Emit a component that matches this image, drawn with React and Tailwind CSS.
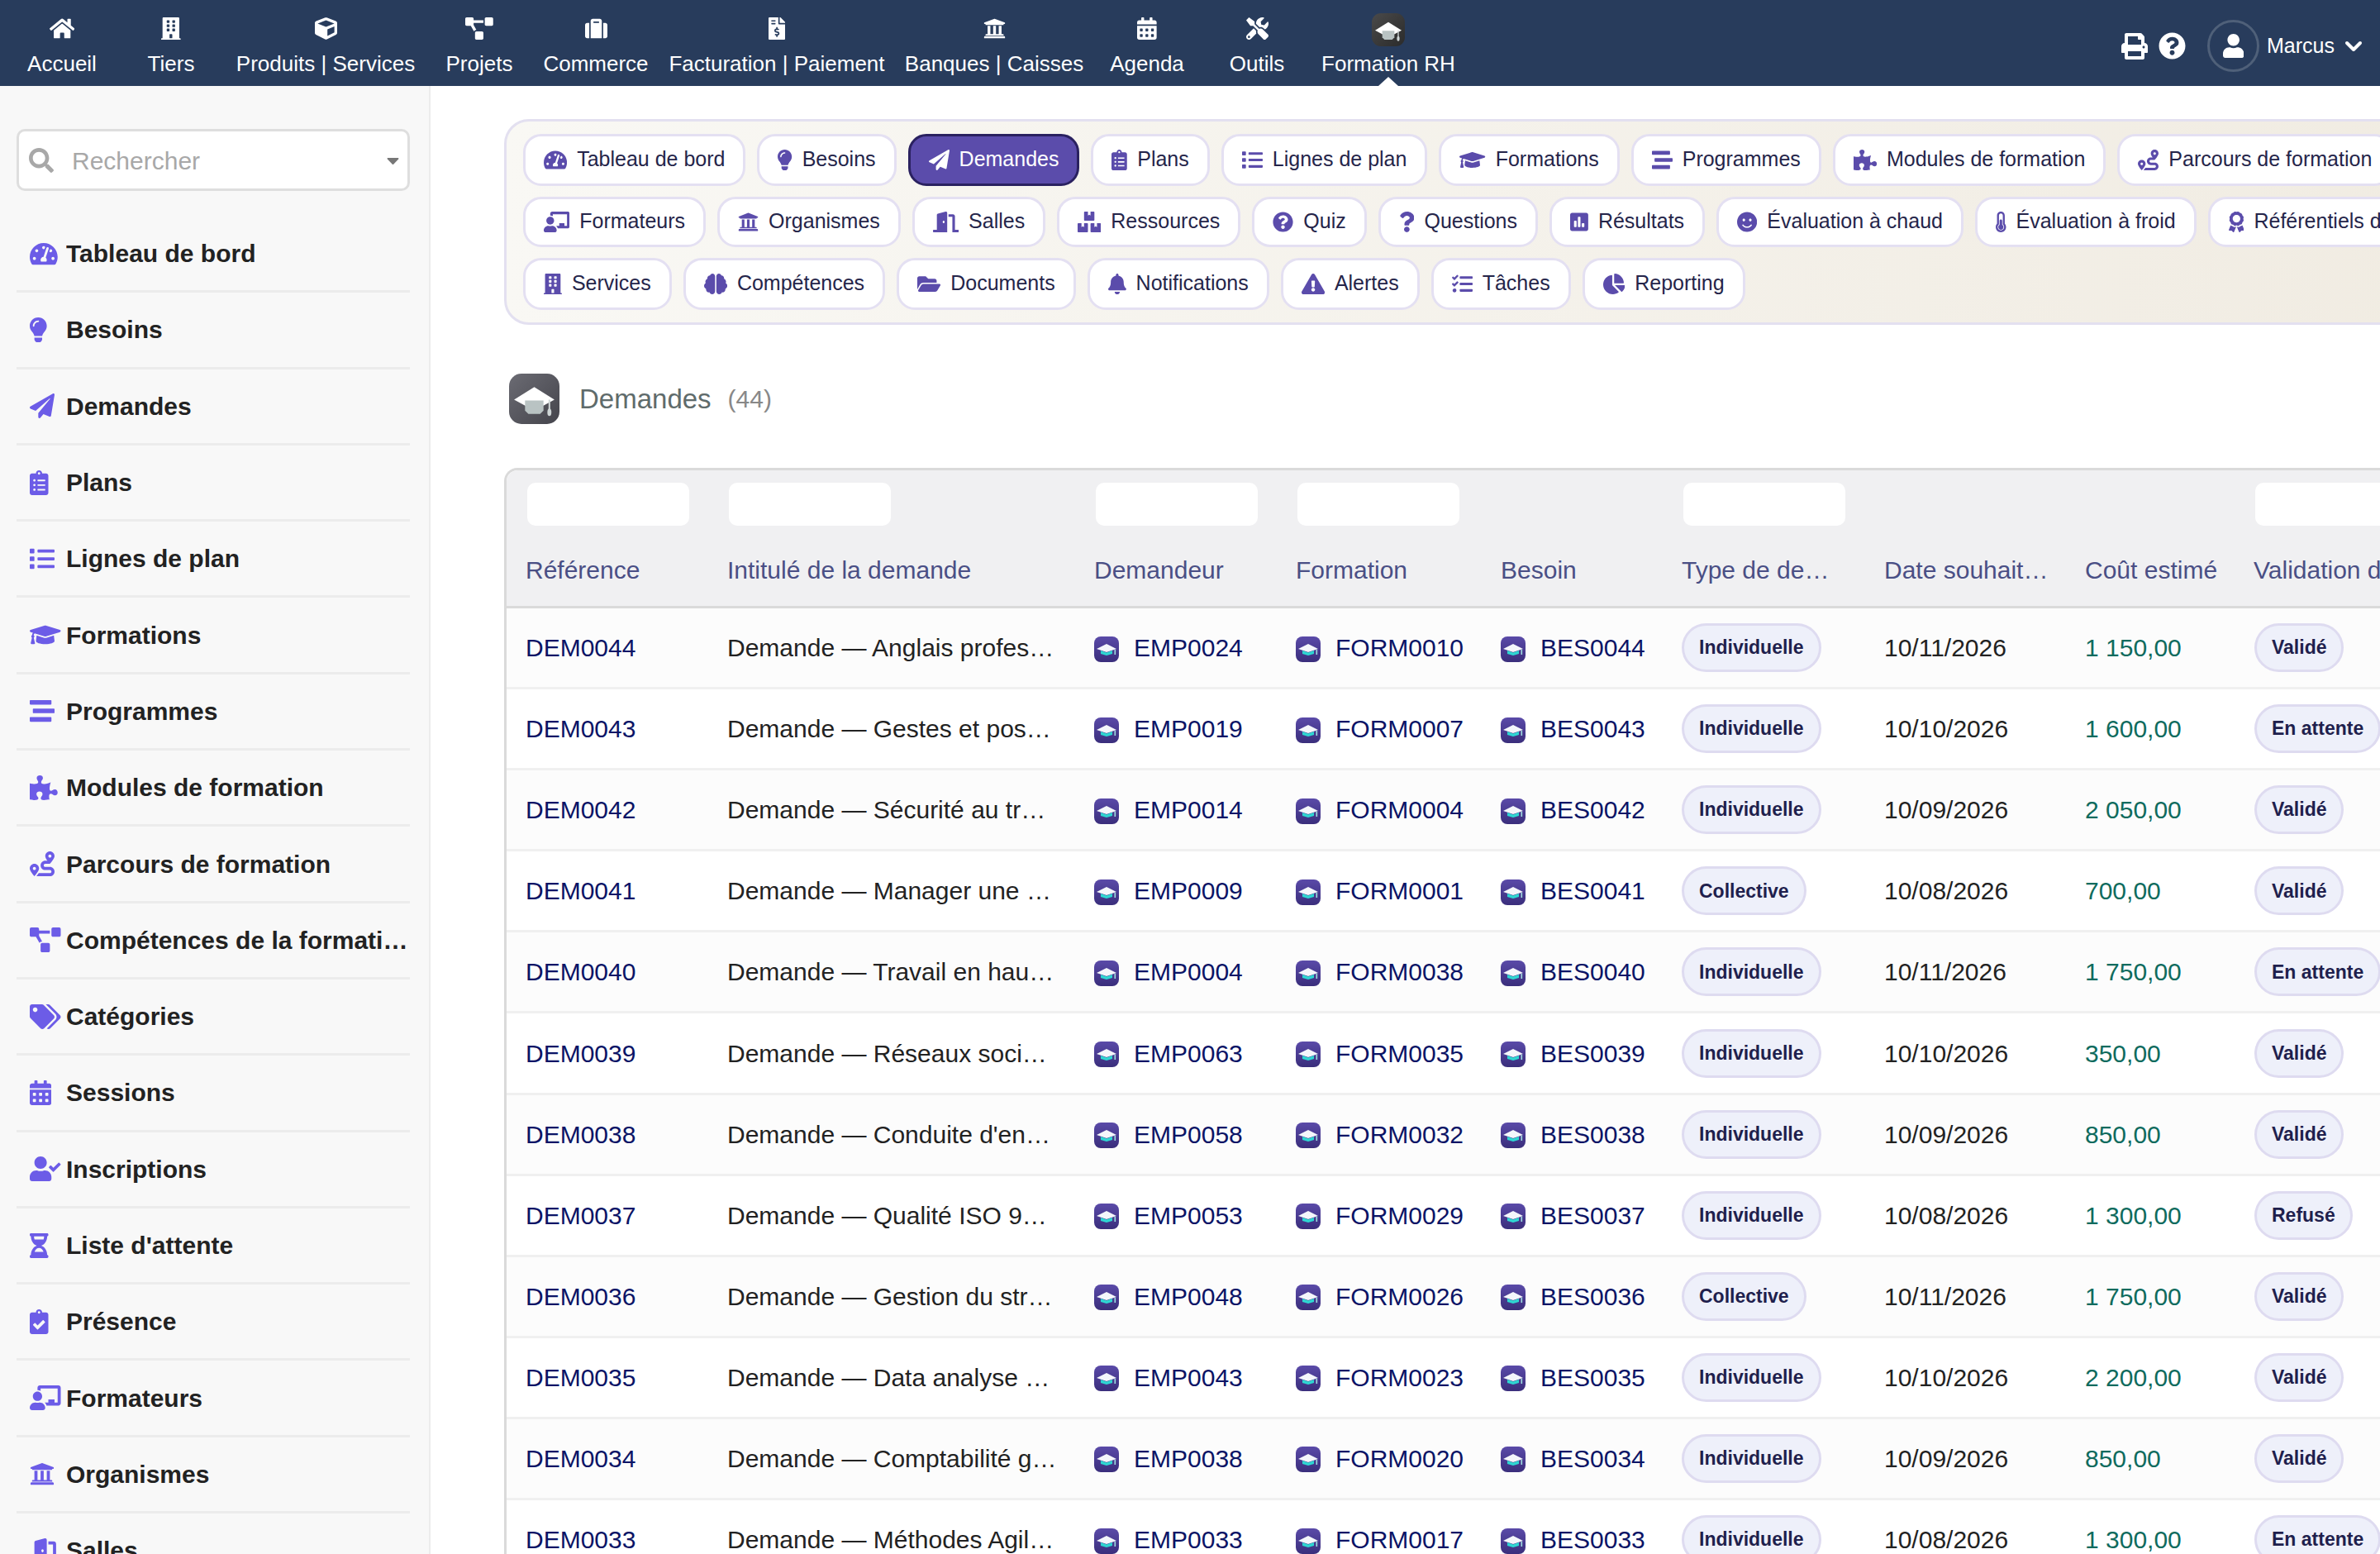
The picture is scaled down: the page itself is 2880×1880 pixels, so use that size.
import {
  FaAward, FaBell, FaBoxes, FaBrain, FaBuilding, FaCalendarAlt, FaCaretDown, FaChalkboardTeacher,
  FaChartPie, FaClipboardCheck, FaClipboardList, FaCube, FaDoorOpen, FaExclamationTriangle,
  FaFileInvoiceDollar, FaFolderOpen, FaGraduationCap, FaHome, FaHourglassHalf, FaLightbulb, FaList,
  FaPaperPlane, FaPoll, FaPrint, FaProjectDiagram, FaPuzzlePiece, FaQuestion, FaQuestionCircle,
  FaRoute, FaSearch, FaSmile, FaStream, FaSuitcase, FaTachometerAlt, FaTags, FaTasks,
  FaThermometerHalf, FaTools, FaUniversity, FaUser, FaUserCheck,
} from "react-icons/fa";
import { ChevronDown } from "lucide-react";

const navItems = [
  { label: "Accueil", icon: FaHome, width: "w-[150px]" },
  { label: "Tiers", icon: FaBuilding, width: "w-[114px]" },
  { label: "Produits | Services", icon: FaCube, width: "w-[260px]" },
  { label: "Projets", icon: FaProjectDiagram, width: "w-[112px]" },
  { label: "Commerce", icon: FaSuitcase, width: "w-[170px]" },
  { label: "Facturation | Paiement", icon: FaFileInvoiceDollar, width: "w-[268px]" },
  { label: "Banques | Caisses", icon: FaUniversity, width: "w-[258px]" },
  { label: "Agenda", icon: FaCalendarAlt, width: "w-[112px]" },
  { label: "Outils", icon: FaTools, width: "w-[154px]" },
];

const sideItems = [
  ["Tableau de bord", FaTachometerAlt],
  ["Besoins", FaLightbulb],
  ["Demandes", FaPaperPlane],
  ["Plans", FaClipboardList],
  ["Lignes de plan", FaList],
  ["Formations", FaGraduationCap],
  ["Programmes", FaStream],
  ["Modules de formation", FaPuzzlePiece],
  ["Parcours de formation", FaRoute],
  ["Compétences de la formation", FaProjectDiagram],
  ["Catégories", FaTags],
  ["Sessions", FaCalendarAlt],
  ["Inscriptions", FaUserCheck],
  ["Liste d'attente", FaHourglassHalf],
  ["Présence", FaClipboardCheck],
  ["Formateurs", FaChalkboardTeacher],
  ["Organismes", FaUniversity],
  ["Salles", FaDoorOpen],
];

const chipRows = [
  {
    height: "h-[63px]",
    chips: [
      ["Tableau de bord", FaTachometerAlt],
      ["Besoins", FaLightbulb],
      ["Demandes", FaPaperPlane, true],
      ["Plans", FaClipboardList],
      ["Lignes de plan", FaList],
      ["Formations", FaGraduationCap],
      ["Programmes", FaStream],
      ["Modules de formation", FaPuzzlePiece],
      ["Parcours de formation", FaRoute],
    ],
  },
  {
    height: "h-[61px]",
    chips: [
      ["Formateurs", FaChalkboardTeacher],
      ["Organismes", FaUniversity],
      ["Salles", FaDoorOpen],
      ["Ressources", FaBoxes],
      ["Quiz", FaQuestionCircle],
      ["Questions", FaQuestion],
      ["Résultats", FaPoll],
      ["Évaluation à chaud", FaSmile],
      ["Évaluation à froid", FaThermometerHalf],
      ["Référentiels de compétences", FaAward],
    ],
  },
  {
    height: "h-[63px]",
    chips: [
      ["Services", FaBuilding],
      ["Compétences", FaBrain],
      ["Documents", FaFolderOpen],
      ["Notifications", FaBell],
      ["Alertes", FaExclamationTriangle],
      ["Tâches", FaTasks],
      ["Reporting", FaChartPie],
    ],
  },
];

const rows = [
  ["DEM0044", "Anglais professionnel", "EMP0024", "FORM0010", "BES0044", "Individuelle", "10/11/2026", "1 150,00", "Validé"],
  ["DEM0043", "Gestes et postures", "EMP0019", "FORM0007", "BES0043", "Individuelle", "10/10/2026", "1 600,00", "En attente"],
  ["DEM0042", "Sécurité au travail", "EMP0014", "FORM0004", "BES0042", "Individuelle", "10/09/2026", "2 050,00", "Validé"],
  ["DEM0041", "Manager une équipe", "EMP0009", "FORM0001", "BES0041", "Collective", "10/08/2026", "700,00", "Validé"],
  ["DEM0040", "Travail en hauteur", "EMP0004", "FORM0038", "BES0040", "Individuelle", "10/11/2026", "1 750,00", "En attente"],
  ["DEM0039", "Réseaux sociaux", "EMP0063", "FORM0035", "BES0039", "Individuelle", "10/10/2026", "350,00", "Validé"],
  ["DEM0038", "Conduite d'engins", "EMP0058", "FORM0032", "BES0038", "Individuelle", "10/09/2026", "850,00", "Validé"],
  ["DEM0037", "Qualité ISO 9001", "EMP0053", "FORM0029", "BES0037", "Individuelle", "10/08/2026", "1 300,00", "Refusé"],
  ["DEM0036", "Gestion du stress", "EMP0048", "FORM0026", "BES0036", "Collective", "10/11/2026", "1 750,00", "Validé"],
  ["DEM0035", "Data analyse Excel", "EMP0043", "FORM0023", "BES0035", "Individuelle", "10/10/2026", "2 200,00", "Validé"],
  ["DEM0034", "Comptabilité générale", "EMP0038", "FORM0020", "BES0034", "Individuelle", "10/09/2026", "850,00", "Validé"],
  ["DEM0033", "Méthodes Agiles Scrum", "EMP0033", "FORM0017", "BES0033", "Individuelle", "10/08/2026", "1 300,00", "En attente"],
];

const gridCols = "grid grid-cols-[241px_444px_244px_248px_219px_245px_243px_204px_1fr]";

// little square app logo, the graduation cap next to each linked record
const MiniLogo = () => (
  <svg viewBox="0 0 30 31" className="w-[30px] h-[31px] shrink-0 mt-[3px]">
    <defs>
      <linearGradient id="mini" x1="0" y1="0" x2="0" y2="1">
        <stop offset="0" stopColor="#5a4aa8" />
        <stop offset="1" stopColor="#3a2e7c" />
      </linearGradient>
    </defs>
    <rect width="30" height="31" rx="8" fill="url(#mini)" />
    <polygon points="15,9 27,15 15,19 3,15" fill="#f4f6fb" />
    <polygon points="8,17 15,19.5 22,17 22,21 15,23 8,21" fill="#2fd6d2" />
    <rect x="24.5" y="16" width="1.6" height="6" fill="#9fdde0" />
  </svg>
);

// larger logo used in the header bar and above the table
const CapLogo = ({ from, to, size }) => (
  <div className={`flex items-center justify-center bg-linear-to-br ${from} ${to} ${size}`}>
    <svg viewBox="0 0 60 60" className="w-full h-full">
      <polygon points="30,16 54,31 30,44 6,31" fill="#ffffff" />
      <polygon points="19,32 41,32 41,44 37,48 23,48 19,44" fill="#b9c3c3" />
      <rect x="47" y="31" width="2" height="12" fill="#cfd6d6" />
      <ellipse cx="48" cy="46" rx="2.4" ry="4.5" fill="#cfd6d6" />
    </svg>
  </div>
);

const TopBar = () => (
  <header className="h-[104px] shrink-0 bg-[#283c5c] flex text-white">
    {navItems.map(({ label, icon: Icon, width }) => (
      <div key={label} className={`${width} flex flex-col items-center`}>
        <div className="h-[32px] mt-[18px] flex items-center justify-center">
          <Icon size="auto" className="h-[27px] w-auto" />
        </div>
        <span className="mt-[12px] text-[26px] leading-[30px] whitespace-nowrap">{label}</span>
      </div>
    ))}
    <div className="relative w-[164px] flex flex-col items-center">
      <div className="mt-[16px]">
        <CapLogo from="from-[#4a4a4a]" to="to-[#2b2b2b]" size="w-[40px] h-[40px] rounded-[11px]" />
      </div>
      <span className="mt-[6px] text-[26px] leading-[30px] whitespace-nowrap">Formation RH</span>
      <span className="absolute bottom-0 left-[70px] w-0 h-0 border-x-[12px] border-x-transparent border-b-[11px] border-b-white" />
    </div>
    <div className="ml-auto pr-[16px] pt-[7px] flex items-center">
      <FaPrint size="auto" className="h-[32px] w-auto" />
      <FaQuestionCircle size="auto" className="h-[33px] w-auto ml-[13px]" />
      <div className="ml-[26px] w-[63px] h-[63px] rounded-full border-[3px] border-[#4f6079] flex items-center justify-center">
        <FaUser size="auto" className="h-[29px] w-auto" />
      </div>
      <span className="ml-[9px] text-[25px]">Marcus</span>
      <ChevronDown size={32} strokeWidth={3} className="ml-[7px]" />
    </div>
  </header>
);

const Sidebar = () => (
  <aside className="w-[521px] shrink-0 bg-[#f8f8f8] border-r-2 border-[#ececec] pt-[52px]">
    <div className="ml-[20px] w-[476px] h-[75px] bg-white border-[3px] border-[#dedede] rounded-[10px] flex items-center pl-[12px] pr-[10px]">
      <FaSearch size="auto" className="h-[30px] w-auto text-[#a8a8a8]" />
      <span className="ml-[22px] text-[30px] text-[#a8a8a8] translate-y-px">Rechercher</span>
      <FaCaretDown size="auto" className="h-[24px] w-auto ml-auto text-[#777777]" />
    </div>
    <nav className="mt-[31px] ml-[20px] w-[476px]">
      {sideItems.map(([label, Icon]) => (
        <div key={label} className="h-[92.3px] border-b-[3px] border-[#ececec] pl-[16px] flex items-center text-[30px] font-bold text-[#222222]">
          <span className="w-[44px] shrink-0">
            <Icon size="auto" className="h-[30px] w-auto text-[#6c5ce7]" />
          </span>
          <span className="truncate">{label}</span>
        </div>
      ))}
    </nav>
  </aside>
);

const Chip = ({ label, icon: Icon, active }) => (
  <div
    className={`h-full px-[22px] flex items-center gap-[12px] rounded-[22px] border-[3px] text-[25px] whitespace-nowrap ${
      active ? "bg-[#5b4cab] border-[#2a2160] text-white" : "bg-white border-[#e4e0f2] text-[#25254a]"
    }`}
  >
    <Icon size="auto" className={`h-[25px] w-auto ${active ? "text-white" : "text-[#5b4cab]"}`} />
    <span className="-translate-y-px">{label}</span>
  </div>
);

const FilterPanel = () => (
  <div className="w-[2500px] rounded-l-[30px] border-[3px] border-[#e3e0f0] bg-linear-to-r from-[#f9f8f4] to-[#f0ebe1] pl-[20px] py-[15px] flex flex-col gap-[13px]">
    {chipRows.map((row) => (
      <div key={row.chips[0][0]} className={`${row.height} flex gap-[14px]`}>
        {row.chips.map(([label, icon, active]) => (
          <Chip key={label} label={label} icon={icon} active={active} />
        ))}
      </div>
    ))}
  </div>
);

const FilterInput = () => <div className="ml-[2px] w-[196px] h-[52px] bg-white rounded-[10px]" />;

const Badge = ({ children }) => (
  <span className="inline-flex items-center h-[59px] px-[18px] rounded-[30px] bg-[#eef0fa] border-[3px] border-[#dedbf0] text-[23px] font-bold text-[#1f1f4d] whitespace-nowrap">
    {children}
  </span>
);

const RecordLink = ({ children }) => (
  <div className="flex items-center gap-[18px] text-[#0b1466]">
    <MiniLogo />
    {children}
  </div>
);

const DataTable = () => {
  const headers = ["Référence", "Intitulé de la demande", "Demandeur", "Formation", "Besoin", "Type de demande", "Date souhaitée", "Coût estimé", "Validation du manager"];
  const withFilter = [true, true, true, true, false, true, false, false, true];

  return (
    <div className="w-[2500px] mt-[53px] border-t-[3px] border-l-[3px] border-[#dadada] rounded-tl-[16px] text-[30px]">
      <div className={`${gridCols} h-[167px] bg-[#f0f0f2] border-b-[3px] border-[#dadada] rounded-tl-[14px]`}>
        {headers.map((h, i) => (
          <div key={h} className={`${i === 0 ? "pl-[23px]" : "pl-[26px]"} ${i === 7 ? "pr-[10px]" : "pr-[18px]"} pt-[15px] min-w-0`}>
            <div className="h-[52px]">{withFilter[i] && <FilterInput />}</div>
            <div className="mt-[36px] leading-[36px] text-[#4a4f85] truncate">{h}</div>
          </div>
        ))}
      </div>
      {rows.map((r, idx) => (
        <div
          key={r[0]}
          className={`${gridCols} h-[98.1px] items-center border-b-[3px] border-[#f0f0f0] ${idx % 2 === 0 ? "bg-[#fcfcfc]" : "bg-white"}`}
        >
          <div className="pl-[23px] text-[#0b1466]">{r[0]}</div>
          <div className="pl-[26px] pr-[18px] text-[#222222] truncate">Demande — {r[1]}</div>
          <div className="pl-[26px]"><RecordLink>{r[2]}</RecordLink></div>
          <div className="pl-[26px]"><RecordLink>{r[3]}</RecordLink></div>
          <div className="pl-[26px]"><RecordLink>{r[4]}</RecordLink></div>
          <div className="pl-[26px]"><Badge>{r[5]}</Badge></div>
          <div className="pl-[26px] text-[#222222]">{r[6]}</div>
          <div className="pl-[26px] text-[#0f6b5e]">{r[7]}</div>
          <div className="pl-[27px]"><Badge>{r[8]}</Badge></div>
        </div>
      ))}
    </div>
  );
};

const App = () => {
  return (
    <div className="h-screen overflow-hidden flex flex-col bg-white font-['Liberation_Sans',Arial,sans-serif]">
      <TopBar />
      <div className="flex flex-1 min-h-0">
        <Sidebar />
        <main className="flex-1 min-w-0 overflow-hidden pt-[40px] pl-[89px]">
          <FilterPanel />
          <div className="mt-[59px] pl-[6px] flex items-center h-[61px]">
            <CapLogo from="from-[#6b6b73]" to="to-[#45454c]" size="w-[61px] h-[61px] rounded-[15px]" />
            <span className="ml-[24px] text-[33px] text-[#5f6b6b]">Demandes</span>
            <span className="ml-[20px] text-[30px] text-[#888888]">(44)</span>
          </div>
          <DataTable />
        </main>
      </div>
    </div>
  );
};

export default App;
